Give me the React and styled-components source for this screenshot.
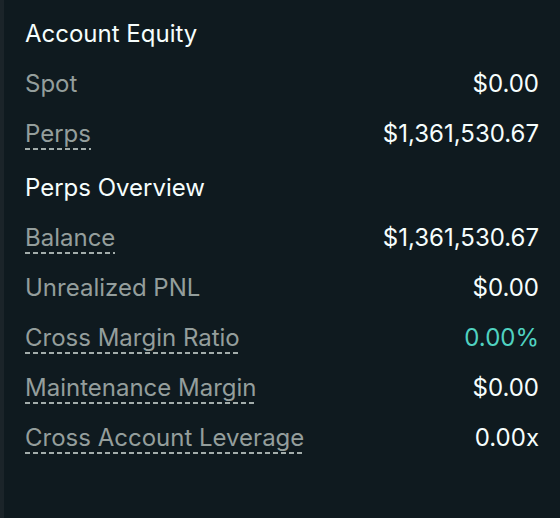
import React from "react";
import styled, { createGlobalStyle } from "styled-components";

const Global = createGlobalStyle`
  html, body { margin: 0; padding: 0; background: #0f1a1f; }
  body { font-family: Inter, "Noto Sans", sans-serif; -webkit-font-smoothing: antialiased; }
`;

const Frame = styled.div`
  display: flex;
  width: 560px;
  height: 518px;
  background: #0f1a1f;
`;

const Strip = styled.div`
  width: 4px;
  flex-shrink: 0;
  background: #1b2429;
`;

const Panel = styled.div`
  flex: 1;
  display: flex;
  flex-direction: column;
  gap: 4px;
  padding: 9px 21px 0 21px;
`;

const Section = styled.div`
  display: flex;
  flex-direction: column;
`;

const Row = styled.div`
  display: flex;
  align-items: center;
  justify-content: space-between;
  height: 50px;
  font-size: 24px;
  line-height: 30px;
`;

const Title = styled.div`
  color: #f6fefd;
  font-weight: 400;
`;

const Label = styled.span`
  position: relative;
  color: #949e9c;
  ${({ $tip }) =>
    $tip &&
    `
    &::after {
      content: "";
      position: absolute;
      left: 0;
      right: 0;
      bottom: -1px;
      height: 2px;
      background: repeating-linear-gradient(to right, #a3adab 0 5px, transparent 5px 8px);
    }
  `}
`;

const Value = styled.span`
  color: ${({ $tone }) => ($tone === "green" ? "#50d2c1" : "#f6fefd")};
`;

const sections = [
  {
    title: "Account Equity",
    rows: [
      { label: "Spot", value: "$0.00" },
      { label: "Perps", value: "$1,361,530.67", tip: true },
    ],
  },
  {
    title: "Perps Overview",
    rows: [
      { label: "Balance", value: "$1,361,530.67", tip: true },
      { label: "Unrealized PNL", value: "$0.00" },
      { label: "Cross Margin Ratio", value: "0.00%", tip: true, tone: "green" },
      { label: "Maintenance Margin", value: "$0.00", tip: true },
      { label: "Cross Account Leverage", value: "0.00x", tip: true },
    ],
  },
];

export default function App() {
  return (
    <>
      <Global />
      <Frame>
        <Strip />
        <Panel>
          {sections.map((s) => (
            <Section key={s.title}>
              <Row>
                <Title>{s.title}</Title>
              </Row>
              {s.rows.map((r) => (
                <Row key={r.label}>
                  <Label $tip={r.tip}>{r.label}</Label>
                  <Value $tone={r.tone}>{r.value}</Value>
                </Row>
              ))}
            </Section>
          ))}
        </Panel>
      </Frame>
    </>
  );
}
